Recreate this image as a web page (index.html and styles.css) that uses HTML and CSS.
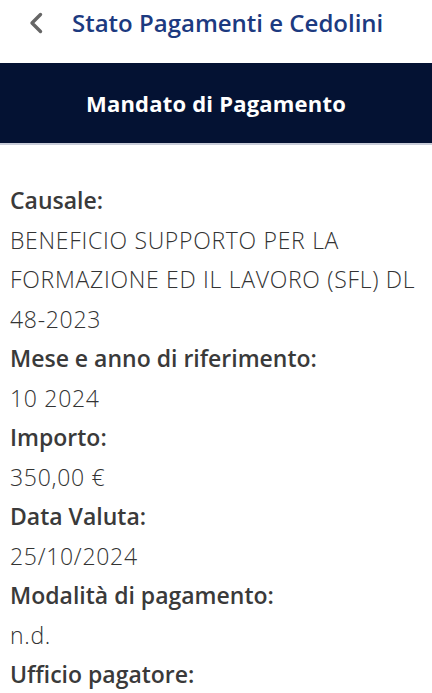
FILE: index.html
```html
<!DOCTYPE html>
<html lang="it">
<head>
  <meta charset="UTF-8">
  <meta name="viewport" content="width=device-width, initial-scale=1.0">
  <title>Mandato di Pagamento</title>
  <link rel="stylesheet" href="styles.css">
</head>
<body>
  <div class="topbar">
    <span class="back">
      <svg width="14" height="22" viewBox="0 0 14 22"><path d="M11.5 2.5 L3 11 L11.5 19.5" fill="none" stroke="#666" stroke-width="3.4" stroke-linecap="round" stroke-linejoin="round"/></svg>
    </span>
    <span class="page-title">Stato Pagamenti e Cedolini</span>
  </div>
  <div class="banner">Mandato di Pagamento</div>

  <div class="details">
    <div class="label">Causale:</div>
    <div class="value">BENEFICIO SUPPORTO PER LA FORMAZIONE ED IL LAVORO (SFL) DL 48-2023</div>
    <div class="label">Mese e anno di riferimento:</div>
    <div class="value">10 2024</div>
    <div class="label">Importo:</div>
    <div class="value">350,00 €</div>
    <div class="label">Data Valuta:</div>
    <div class="value">25/10/2024</div>
    <div class="label">Modalità di pagamento:</div>
    <div class="value">n.d.</div>
    <div class="label">Ufficio pagatore:</div>
  </div>
</body>
</html>
```

FILE: styles.css
```css
body {
  margin: 0;
  font-family: "Open Sans", "Liberation Sans", sans-serif;
  background-color: #fff;
  color: #333;
}

.topbar {
  height: 63px;
  box-sizing: border-box;
  display: flex;
  align-items: flex-start;
  padding: 6px 0 0 29px;
  gap: 29px;
}

.back {
  display: flex;
  padding-top: 6px;
}

.page-title {
  font-size: 24px;
  line-height: 34px;
  font-weight: 600;
  color: #1c3a80;
}

.banner {
  height: 80px;
  background-color: #041233;
  color: #fff;
  font-size: 22px;
  letter-spacing: 0.2px;
  font-weight: 700;
  display: flex;
  align-items: center;
  justify-content: center;
  border-bottom: 2px solid #c8ccd8;
}

.details {
  padding: 36px 10px 0;
  font-size: 23px;
  line-height: 39.5px;
}

.label {
  font-weight: 600;
  color: #3a3a3a;
}

.value {
  font-weight: 300;
  letter-spacing: 0.7px;
  color: #333;
}
```
